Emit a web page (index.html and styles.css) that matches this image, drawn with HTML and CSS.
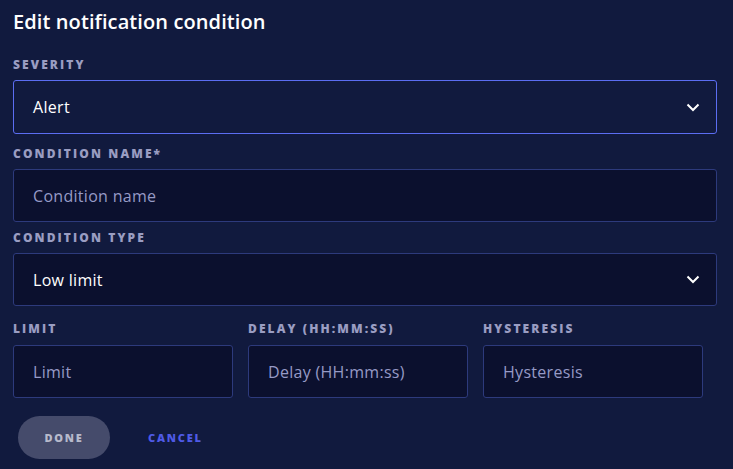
FILE: index.html
```html
<!DOCTYPE html>
<html lang="en">
<head>
    <meta charset="UTF-8">
    <meta name="viewport" content="width=device-width, initial-scale=1.0">
    <title>Edit notification condition</title>
    <link rel="stylesheet" href="styles.css">
</head>
<body>
    <div class="dialog">
        <h2 class="title">Edit notification condition</h2>

        <div class="field severity">
            <label class="field-label">Severity</label>
            <div class="select focused">
                <span class="value">Alert</span>
                <svg class="chevron" width="14" height="9" viewBox="0 0 14 9"><path d="M1.5 1.5 L7 7 L12.5 1.5" fill="none" stroke="#fff" stroke-width="2"/></svg>
            </div>
        </div>

        <div class="field name">
            <label class="field-label">Condition name*</label>
            <div class="input"><span class="placeholder">Condition name</span></div>
        </div>

        <div class="field type">
            <label class="field-label">Condition type</label>
            <div class="select">
                <span class="value">Low limit</span>
                <svg class="chevron" width="14" height="9" viewBox="0 0 14 9"><path d="M1.5 1.5 L7 7 L12.5 1.5" fill="none" stroke="#fff" stroke-width="2"/></svg>
            </div>
        </div>

        <div class="row">
            <div class="field">
                <label class="field-label">Limit</label>
                <div class="input"><span class="placeholder">Limit</span></div>
            </div>
            <div class="field">
                <label class="field-label">Delay (HH:MM:SS)</label>
                <div class="input"><span class="placeholder">Delay (HH:mm:ss)</span></div>
            </div>
            <div class="field">
                <label class="field-label">Hysteresis</label>
                <div class="input"><span class="placeholder">Hysteresis</span></div>
            </div>
        </div>

        <div class="actions">
            <button class="btn-done" type="button">Done</button>
            <button class="btn-cancel" type="button">Cancel</button>
        </div>
    </div>
</body>
</html>
```

FILE: styles.css
```css
body {
    margin: 0;
    padding: 0;
    background: #111a3e;
    font-family: "Open Sans", "Noto Sans", sans-serif;
    color: #fff;
}

.dialog {
    padding: 10px 16px 0 13px;
}

.title {
    margin: 0 0 24px;
    font-size: 20px;
    font-weight: 600;
    letter-spacing: 0.1px;
    line-height: 24px;
}

.field {
    display: flex;
    flex-direction: column;
}

.field.name {
    margin-top: 13px;
}

.field.type {
    margin-top: 9px;
}

.field-label {
    font-size: 12px;
    font-weight: 800;
    letter-spacing: 2.1px;
    text-transform: uppercase;
    color: #9a9dc2;
    line-height: 14px;
    margin-bottom: 8px;
}

.select,
.input {
    box-sizing: border-box;
    height: 53px;
    display: flex;
    align-items: center;
    justify-content: space-between;
    padding: 0 16px 0 19px;
    border: 1px solid #2d3a7c;
    border-radius: 3px;
    background: #0b102e;
    font-size: 16px;
    letter-spacing: 0.3px;
}

.select.focused {
    height: 54px;
    border-color: #5b6df2;
    background: #111a3e;
}

.value {
    font-weight: 500;
    color: #fff;
}

.placeholder {
    color: #969ac6;
}

.row {
    display: grid;
    grid-template-columns: 220px 220px 220px;
    gap: 15px;
    margin-top: 16px;
}

.row .field-label {
    margin-bottom: 9px;
}

.actions {
    display: flex;
    align-items: center;
    gap: 24px;
    margin-top: 18px;
    padding-left: 5px;
}

.btn-done {
    width: 92px;
    height: 43px;
    border: none;
    border-radius: 22px;
    background: #454b6b;
    color: #b7bacb;
    font-family: inherit;
    font-size: 11px;
    font-weight: 800;
    letter-spacing: 1.8px;
    text-transform: uppercase;
}

.btn-cancel {
    border: none;
    background: none;
    padding: 8px 14px;
    color: #4f5ae6;
    font-family: inherit;
    font-size: 11px;
    font-weight: 800;
    letter-spacing: 1.8px;
    text-transform: uppercase;
}
```
